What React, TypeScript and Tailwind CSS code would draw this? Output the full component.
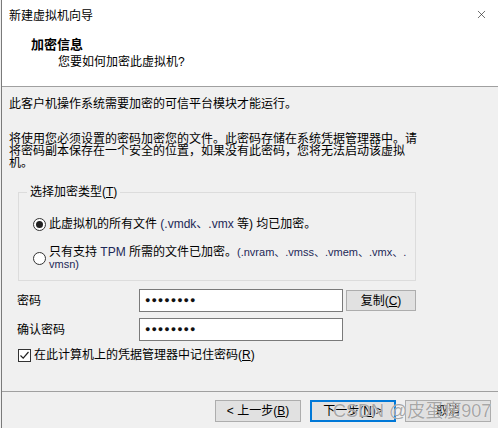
import { X } from 'lucide-react';

const FONT = "font-['Liberation_Sans','Noto_Sans_CJK_SC',sans-serif]";

function Key({ k }: { k: string }) {
  return (
    <span>
      (<span className="underline underline-offset-1">{k}</span>)
    </span>
  );
}

function Radio({ checked }: { checked?: boolean }) {
  return (
    <span className="w-[13px] h-[13px] shrink-0 rounded-full border border-[#333] bg-white flex items-center justify-center">
      {checked && <span className="w-[7px] h-[7px] rounded-full bg-[#222]" />}
    </span>
  );
}

function Button({ children, primary }: { children: React.ReactNode; primary?: boolean }) {
  return (
    <button
      className={
        'h-[22px] w-[86px] text-[12px] flex items-center justify-center bg-[#e1e1e1] ' +
        (primary ? 'border-2 border-[#0078d7]' : 'border border-[#adadad]')
      }
    >
      {children}
    </button>
  );
}

export default function App() {
  return (
    <div className={`w-[498px] h-[428px] bg-[#f0f0f0] text-black text-[12px] relative overflow-hidden ${FONT}`}>
      <div className="ml-px h-full border-l border-[#7a7a7a] flex flex-col">

        {/* Header */}
        <div className="h-[87px] bg-white border-b border-[#a0a0a0] relative">
          <div className="pl-[7px] pt-[8px] leading-[16px]">新建虚拟机向导</div>
          <X className="absolute right-[10px] top-[8px] w-[13px] h-[13px] text-[#222]" strokeWidth={1.2} />
          <div className="pl-[29px] mt-[13px] leading-[16px] text-[13px] font-bold">加密信息</div>
          <div className="pl-[56px] mt-[1px] leading-[16px]">您要如何加密此虚拟机?</div>
        </div>

        {/* Body */}
        <div className="flex-1 flex flex-col">
          <p className="pl-[7px] pt-[9px] leading-[16px]">此客户机操作系统需要加密的可信平台模块才能运行。</p>
          <p className="pl-[7px] mt-[21px] leading-[12px]">
            将使用您必须设置的密码加密您的文件。此密码存储在系统凭据管理器中。请<br />
            将密码副本保存在一个安全的位置，如果没有此密码，您将无法启动该虚拟<br />
            机。
          </p>

          <fieldset className="ml-[16px] mt-[16px] w-[398px] h-[96px] border border-[#dcdcdc] pl-[14px] pr-[8px]">
            <legend className="ml-[-6px] px-[3px] leading-[14px]">
              选择加密类型<Key k="T" />
            </legend>
            <div className="flex items-center gap-[3px] mt-[17px] leading-[16px]">
              <Radio checked />
              <span>
                此虚拟机的所有文件 <span className="text-[#1d2857]">(.vmdk、.vmx</span> 等) 均已加密。
              </span>
            </div>
            <div className="flex items-center gap-[3px] mt-[14px]">
              <Radio />
              <span className="leading-[12px]">
                只有支持 <span className="text-[#1d2857]">TPM</span> 所需的文件已加密。
                <span className="text-[11px] text-[#1d2857]">(.nvram、.vmss、.vmem、.vmx、.</span>
                <br />
                <span className="text-[11px] text-[#1d2857]">vmsn)</span>
              </span>
            </div>
          </fieldset>

          <div className="flex items-center mt-[8px] h-[23px]">
            <span className="pl-[15px] w-[137px]">密码</span>
            <div className="w-[204px] h-[23px] bg-white border border-[#7a7a7a] flex items-center pl-[5px] text-[9px] tracking-[1px] text-[#111]">
              ●●●●●●●●
            </div>
            <button className="ml-[3px] h-[21px] w-[70px] bg-[#e1e1e1] border border-[#adadad] text-[12px] flex items-center justify-center">
              复制<Key k="C" />
            </button>
          </div>
          <div className="flex items-center mt-[6px] h-[23px]">
            <span className="pl-[15px] w-[137px]">确认密码</span>
            <div className="w-[204px] h-[23px] bg-white border border-[#7a7a7a] flex items-center pl-[5px] text-[9px] tracking-[1px] text-[#111]">
              ●●●●●●●●
            </div>
          </div>
          <div className="flex items-center mt-[6px] pl-[16px] gap-[3px]">
            <span className="w-[13px] h-[13px] border border-[#333] bg-white flex items-center justify-center">
              <svg width="11" height="11" viewBox="0 0 11 11">
                <path d="M1.5 5.5 L4.2 8.2 L9.5 2" fill="none" stroke="#222" strokeWidth="1.2" />
              </svg>
            </span>
            <span className="leading-[16px]">
              在此计算机上的凭据管理器中记住密码<Key k="R" />
            </span>
          </div>
        </div>

        {/* Footer */}
        <div className="h-[37px] border-t border-[#a0a0a0] flex items-start justify-end gap-[9px] pt-[8px] pr-[7px]">
          <Button>&lt; 上一步<Key k="B" /></Button>
          <Button primary>下一步<Key k="N" /> &gt;</Button>
          <Button>取消</Button>
        </div>
      </div>

      <div className="absolute left-[333px] top-[400px] whitespace-nowrap text-[18px] leading-[22px] text-[#8a8a8a]/75 [text-shadow:0_0_1px_#fff] pointer-events-none">
        CSDN @皮蛋瘦907
      </div>
    </div>
  );
}
